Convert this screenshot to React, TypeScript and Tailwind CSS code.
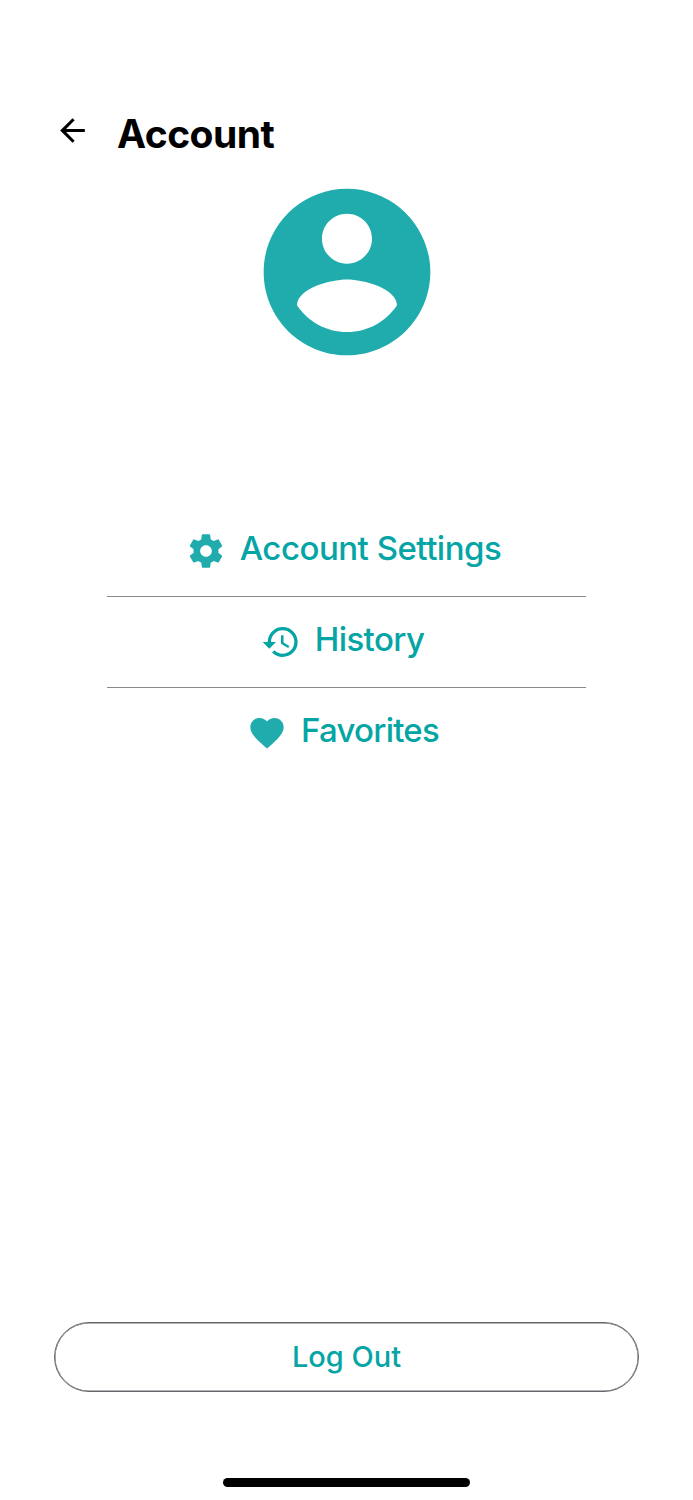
import { MdArrowBack, MdFavorite } from "react-icons/md";

function AccountCircle({ className }: { className: string }) {
  return (
    <svg viewBox="0 0 24 24" fill="currentColor" className={className}>
      <path d="M12 2C6.48 2 2 6.48 2 12s4.48 10 10 10 10-4.48 10-10S17.52 2 12 2zm0 3c1.66 0 3 1.34 3 3s-1.34 3-3 3-3-1.34-3-3 1.34-3 3-3zm0 14.2c-2.5 0-4.71-1.28-6-3.22.03-1.99 4-3.08 6-3.08 1.99 0 5.97 1.09 6 3.08-1.29 1.94-3.5 3.22-6 3.22z" />
    </svg>
  );
}

function Cog({ className }: { className: string }) {
  return (
    <svg viewBox="0 0 24 24" fill="currentColor" className={className}>
      <path d="M19.43 12.98c.04-.32.07-.64.07-.98s-.03-.66-.07-.98l2.11-1.65c.19-.15.24-.42.12-.64l-2-3.46c-.12-.22-.39-.3-.61-.22l-2.49 1c-.52-.4-1.08-.73-1.69-.98l-.38-2.65C14.46 2.18 14.25 2 14 2h-4c-.25 0-.46.18-.49.42l-.38 2.65c-.61.25-1.17.59-1.69.98l-2.49-1c-.23-.09-.49 0-.61.22l-2 3.46c-.13.22-.07.49.12.64l2.11 1.65c-.04.32-.07.65-.07.98s.03.66.07.98l-2.11 1.65c-.19.15-.24.42-.12.64l2 3.46c.12.22.39.3.61.22l2.49-1c.52.4 1.08.73 1.69.98l.38 2.65c.03.24.24.42.49.42h4c.25 0 .46-.18.49-.42l.38-2.65c.61-.25 1.17-.59 1.69-.98l2.49 1c.23.09.49 0 .61-.22l2-3.46c.12-.22.07-.49-.12-.64l-2.11-1.65zM12 15.5c-1.93 0-3.5-1.57-3.5-3.5s1.57-3.5 3.5-3.5 3.5 1.57 3.5 3.5-1.57 3.5-3.5 3.5z" />
    </svg>
  );
}

function History({ className }: { className: string }) {
  return (
    <svg viewBox="0 0 24 24" fill="currentColor" className={className}>
      <path d="M13.5 8H12v5l4.28 2.54.72-1.21-3.5-2.08V8M13 3a9 9 0 0 0-9 9H1l3.96 4.03L9 12H6a7 7 0 0 1 7-7 7 7 0 0 1 7 7 7 7 0 0 1-7 7c-1.93 0-3.68-.79-4.94-2.06l-1.42 1.42A8.896 8.896 0 0 0 13 21a9 9 0 0 0 9-9 9 9 0 0 0-9-9" />
    </svg>
  );
}

export default function App() {
  return (
    <main className="flex h-[1500px] w-[693px] flex-col items-center overflow-hidden bg-white font-['Inter',sans-serif] text-[#05a5a5]">
      <header className="mt-[109px] flex h-[50px] w-full items-center pl-[53.5px] text-black">
        <button aria-label="Back" className="mb-[8px]">
          <MdArrowBack className="size-[37px]" />
        </button>
        <h1 className="ml-[26.5px] text-[39px] leading-[50px] font-bold tracking-[-0.5px]">Account</h1>
      </header>
      <AccountCircle className="mt-[13px] size-[200px] text-[#20acac]" />
      <nav className="mt-[134px] flex w-[479px] flex-col">
        <button className="flex h-[91px] items-center justify-center gap-[14px] border-b border-[#888] pr-[6px]">
          <Cog className="size-10 text-[#20acac]" />
          <span className="pb-[4px] text-[33px] font-medium tracking-[-0.5px]">Account Settings</span>
        </button>
        <button className="flex h-[91px] items-center justify-center gap-[14px] border-b border-[#888] pr-[8px]">
          <History className="size-10 text-[#05a5a5]" />
          <span className="pb-[4px] text-[33px] font-medium tracking-[-0.6px]">History</span>
        </button>
        <button className="flex h-[91px] items-center justify-center gap-[14px] pr-[7px] pb-px">
          <MdFavorite className="size-10 text-[#20acac]" />
          <span className="pb-[4px] text-[33px] font-medium tracking-[-0.75px]">Favorites</span>
        </button>
      </nav>
      <button className="mt-auto mb-[86px] flex h-[70px] w-[585px] shrink-0 items-center justify-center rounded-full border border-[#66646a] shadow-[inset_0_0_0_0.5px_#66646a]">
        <span className="text-[29px] font-medium">Log Out</span>
      </button>
      <div className="mb-[13px] h-[9px] w-[247px] shrink-0 rounded-full bg-black" />
    </main>
  );
}
